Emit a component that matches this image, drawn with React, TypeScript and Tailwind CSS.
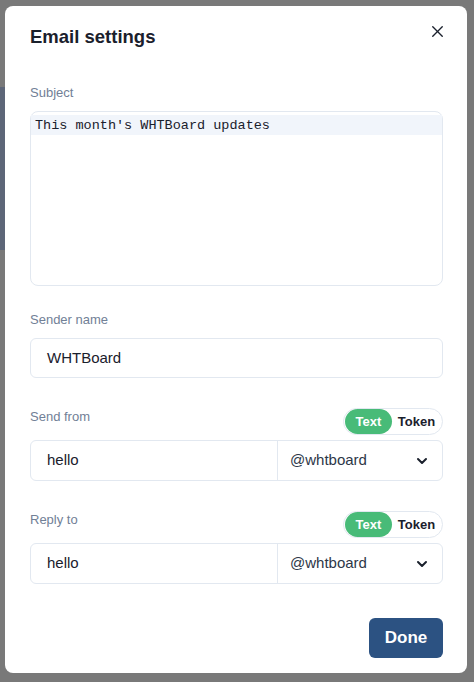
import { X, ChevronDown } from "lucide-react";

const ModeToggle = () => (
  <div className="flex shrink-0 items-center h-[27px] w-[100px] rounded-full border border-[#e2e8f0] bg-white p-px">
    <span className="flex items-center justify-center h-[25px] w-[47px] rounded-full bg-[#48bb78] text-white text-[13px] font-bold">
      Text
    </span>
    <span className="flex-1 text-center text-[13px] font-bold text-[#1a202c]">Token</span>
  </div>
);

const AddressField = ({ label, value }: { label: string; value: string }) => (
  <div className="mt-[30px] shrink-0">
    <div className="flex items-start justify-between">
      <span className="text-[13px] leading-[18px] text-[#718096]">{label}</span>
      <ModeToggle />
    </div>
    <div className="mt-[5px] flex h-[41px] rounded-md border border-[#e2e8f0] bg-white">
      <div className="flex items-center w-[247px] pl-[16px] text-[15px] text-[#1a202c] border-r border-[#e2e8f0]">
        {value}
      </div>
      <div className="flex flex-1 items-center justify-between pl-[12px] pr-[12px] text-[15px] text-[#2d3748]">
        <span>@whtboard</span>
        <ChevronDown className="w-[16px] h-[16px] text-[#1a202c]" strokeWidth={3} />
      </div>
    </div>
  </div>
);

const App = () => {
  return (
    <div
      className="relative w-[474px] h-[682px] overflow-hidden bg-[#797979] pt-[6px] pl-[5px]"
      style={{ fontFamily: '"Liberation Sans", Arial, sans-serif' }}
    >
      {/* page behind the overlay */}
      <div className="absolute left-0 top-[87px] w-[5px] h-[163px] bg-[#5d6678]" />

      <div className="relative w-[462px] h-[667px] rounded-lg bg-white pl-[25px] pr-[24px] pt-[16px] pb-[16px] flex flex-col">
        <div className="flex shrink-0 items-center justify-between h-[30px]">
          <h2 className="text-[18.5px] font-bold text-[#1a202c]">Email settings</h2>
          <X className="w-[19px] h-[19px] text-[#1a202c] -mt-[11px] -mr-[4px]" strokeWidth={1.75} />
        </div>

        <span className="mt-[32px] shrink-0 text-[13px] leading-[18px] text-[#718096]">Subject</span>
        <div className="mt-[9px] h-[175px] shrink-0 rounded-lg border border-[#e2e8f0] pt-[3px]">
          <div
            className="h-[20px] bg-[#f1f5fb] pl-[4px] pt-px text-[13.5px] leading-[20px] text-[#1a202c]"
            style={{ fontFamily: '"Liberation Mono", "Courier New", monospace' }}
          >
            This month's WHTBoard updates
          </div>
        </div>

        <span className="mt-[25px] shrink-0 text-[13px] leading-[18px] text-[#718096]">Sender name</span>
        <div className="mt-[9px] flex shrink-0 items-center h-[40px] rounded-md border border-[#e2e8f0] pl-[16px] text-[15px] text-[#1a202c]">
          WHTBoard
        </div>

        <AddressField label="Send from" value="hello" />
        <AddressField label="Reply to" value="hello" />

        <div className="mt-[34px] flex shrink-0 justify-end">
          <button className="h-[40px] w-[74px] rounded-md bg-[#2c5282] text-[17px] font-bold text-white">
            Done
          </button>
        </div>
      </div>
    </div>
  );
};

export default App;
